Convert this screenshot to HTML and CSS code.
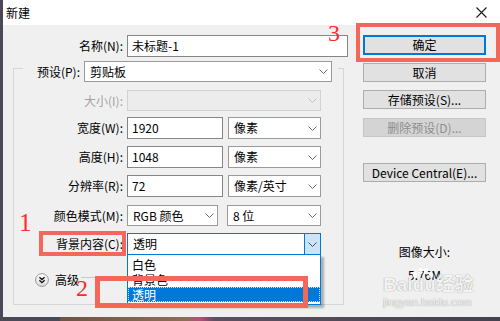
FILE: index.html
```html
<!DOCTYPE html>
<html lang="zh-CN">
<head>
    <meta charset="UTF-8">
    <meta name="viewport" content="width=device-width, initial-scale=1.0">
    <title>新建</title>

    <link rel="stylesheet" href="styles.css">
</head>
<body>
<div class="dialog">
    <div class="titlebar">
        <span>新建</span>
        <svg class="close" width="11" height="11" viewBox="0 0 11 11">
            <path d="M0.5 0.5 L10.5 10.5 M10.5 0.5 L0.5 10.5" stroke="#1a1a1a" stroke-width="1.1" fill="none"/>
        </svg>
    </div>
    <div class="content">
        <div class="form">
            <div class="row name-row">
                <span class="label">名称(N):</span>
                <div class="field name">未标题-1</div>
            </div>
            <div class="group">
                <div class="legend">
                    <span class="label">预设(P):</span>
                    <div class="select preset">
                        <span>剪贴板</span>
                        <span class="drop"><svg width="9" height="5" viewBox="0 0 9 5"><path d="M0.5 0.5 L4.5 4.5 L8.5 0.5" fill="none" stroke="#6b6b6b"/></svg></span>
                    </div>
                </div>
                <div class="row size-row">
                    <span class="label disabled">大小(I):</span>
                    <div class="select wide disabled">
                        <span></span>
                        <span class="drop"><svg width="9" height="5" viewBox="0 0 9 5"><path d="M0.5 0.5 L4.5 4.5 L8.5 0.5" fill="none" stroke="#c2c2c2"/></svg></span>
                    </div>
                </div>
                <div class="row num-row first">
                    <span class="label">宽度(W):</span>
                    <div class="field num">1920</div>
                    <div class="select unit">
                        <span>像素</span>
                        <span class="drop"><svg width="9" height="5" viewBox="0 0 9 5"><path d="M0.5 0.5 L4.5 4.5 L8.5 0.5" fill="none" stroke="#6b6b6b"/></svg></span>
                    </div>
                </div>
                <div class="row num-row">
                    <span class="label">高度(H):</span>
                    <div class="field num">1048</div>
                    <div class="select unit">
                        <span>像素</span>
                        <span class="drop"><svg width="9" height="5" viewBox="0 0 9 5"><path d="M0.5 0.5 L4.5 4.5 L8.5 0.5" fill="none" stroke="#6b6b6b"/></svg></span>
                    </div>
                </div>
                <div class="row num-row">
                    <span class="label">分辨率(R):</span>
                    <div class="field num">72</div>
                    <div class="select unit">
                        <span>像素/英寸</span>
                        <span class="drop"><svg width="9" height="5" viewBox="0 0 9 5"><path d="M0.5 0.5 L4.5 4.5 L8.5 0.5" fill="none" stroke="#6b6b6b"/></svg></span>
                    </div>
                </div>
                <div class="row mode-row">
                    <span class="label">颜色模式(M):</span>
                    <div class="select mode">
                        <span>RGB 颜色</span>
                        <span class="drop"><svg width="9" height="5" viewBox="0 0 9 5"><path d="M0.5 0.5 L4.5 4.5 L8.5 0.5" fill="none" stroke="#6b6b6b"/></svg></span>
                    </div>
                    <div class="select depth">
                        <span>8 位</span>
                        <span class="drop"><svg width="9" height="5" viewBox="0 0 9 5"><path d="M0.5 0.5 L4.5 4.5 L8.5 0.5" fill="none" stroke="#6b6b6b"/></svg></span>
                    </div>
                </div>
                <div class="row bg-row">
                    <span class="label">背景内容(C):</span>
                    <div class="select wide focused">
                        <span>透明</span>
                        <span class="drop"><svg width="9" height="5" viewBox="0 0 9 5"><path d="M0.5 0.5 L4.5 4.5 L8.5 0.5" fill="none" stroke="#4d4d4d"/></svg></span>
                        <ul class="options">
                            <li>白色</li>
                            <li>背景色</li>
                            <li class="selected">透明</li>
                        </ul>
                    </div>
                </div>
                <div class="advanced">
                    <svg class="toggle" width="14" height="14" viewBox="0 0 14 14">
                        <defs>
                            <linearGradient id="knob" x1="0" y1="0" x2="0" y2="1">
                                <stop offset="0" stop-color="#ffffff"/>
                                <stop offset="1" stop-color="#dcdcdc"/>
                            </linearGradient>
                        </defs>
                        <circle cx="7" cy="7" r="6.4" fill="url(#knob)" stroke="#8c8c8c" stroke-width="0.9"/>
                        <path d="M4.4 4.2 L7 6.6 L9.6 4.2 M4.4 7.3 L7 9.7 L9.6 7.3" fill="none" stroke="#111" stroke-width="1.3"/>
                    </svg>
                    <span class="adv-text">高级</span>
                    <span class="rule"></span>
                </div>
            </div>
        </div>
        <div class="side">
            <button class="btn default">确定</button>
            <button class="btn">取消</button>
            <button class="btn">存储预设(S)...</button>
            <button class="btn" disabled>删除预设(D)...</button>
            <button class="btn device">Device Central(E)...</button>
            <div class="image-size">图像大小:</div>
            <div class="image-value">5.76M</div>
        </div>
    </div>
</div>

<div class="mark mark-ok"></div>
<div class="mark mark-bg"></div>
<div class="mark mark-list"></div>
<span class="step step-1">1</span>
<span class="step step-2">2</span>
<span class="step step-3">3</span>

<div class="watermark">
    <svg class="paw" width="22" height="12" viewBox="0 0 22 12">
        <ellipse cx="3" cy="8" rx="2.2" ry="3" fill="#fff"/>
        <ellipse cx="8.5" cy="4" rx="2.2" ry="3.2" fill="#fff"/>
        <ellipse cx="14" cy="4" rx="2.2" ry="3.2" fill="#fff"/>
        <ellipse cx="19" cy="8" rx="2.2" ry="3" fill="#fff"/>
    </svg>
    <span class="wm-logo">Bai<span class="wm-du">du</span>经验</span>
    <span class="wm-url">jingyan.baidu.com</span>
</div>
</body>
</html>
```

FILE: styles.css
```css
* {
    box-sizing: border-box;
}

body {
    position: relative;
    margin: 0;
    height: 321px;
    overflow: hidden;
    background: linear-gradient(to right, #4b4857 0, #4b4857 60px, #6e5444 60px, #8f6d55 185px, #b0527c 200px, #5d5060 214px, #45414e 100%);
    font-family: "Noto Sans CJK SC", "Noto Sans", sans-serif;
    font-size: 12px;
    color: #000;
}

.dialog {
    margin-left: 3px;
    width: 497px;
    height: 317px;
    background-color: #f0f0f0;
}

.titlebar {
    display: flex;
    align-items: center;
    justify-content: space-between;
    height: 25px;
    padding: 0 13px 0 3px;
    background-color: #fff;
    line-height: 16px;
}

.content {
    display: flex;
    padding-top: 10px;
}

.form {
    width: 345px;
}

.row {
    display: flex;
    align-items: center;
}

.label {
    width: 109px;
    margin-right: 4px;
    text-align: right;
    line-height: 16px;
    white-space: nowrap;
}

.label.disabled {
    color: #a3a3a3;
}

.name-row .label {
    width: 120px;
}

.field {
    height: 22px;
    padding-left: 4px;
    border: 1px solid #868686;
    background-color: #fff;
    line-height: 20px;
}

.name {
    width: 221px;
}

.num {
    width: 96px;
}

.group {
    width: 331px;
    margin: 11px 0 0 10px;
    padding-bottom: 16px;
    border: 1px solid #d6d6d6;
}

.legend {
    display: flex;
    align-items: center;
    width: fit-content;
    margin: -8px 0 0 9px;
    padding: 0 6px 0 4px;
    background-color: #f0f0f0;
}

.legend .label {
    width: 53px;
}

.select {
    position: relative;
    display: flex;
    align-items: center;
    justify-content: space-between;
    height: 22px;
    padding-left: 5px;
    border: 1px solid #9a9a9a;
    background-color: #fff;
    line-height: 20px;
    white-space: nowrap;
}

.drop {
    display: flex;
    align-items: center;
    justify-content: center;
    width: 16px;
    height: 100%;
}

.preset {
    width: 248px;
    height: 21px;
}

.wide {
    width: 194px;
}

.select.disabled {
    height: 21px;
    border-color: #d2d2d2;
    background-color: #ececec;
}

.unit {
    width: 93px;
    margin-left: 5px;
}

.mode {
    width: 91px;
    height: 21px;
}

.depth {
    width: 94px;
    height: 21px;
    margin-left: 9px;
}

.size-row {
    margin-top: 8px;
}

.num-row {
    margin-top: 7px;
}

.num-row.first {
    margin-top: 6px;
}

.mode-row {
    margin-top: 8px;
}

.bg-row {
    margin-top: 7px;
}

.focused {
    border-color: #0078d7;
}

.focused .drop {
    border-left: 1px solid #0078d7;
    background-color: #cce4f7;
}

.options {
    position: absolute;
    top: 100%;
    left: -1px;
    width: 194px;
    margin: 0;
    padding: 2px 0;
    list-style: none;
    border: 1px solid #0078d7;
    background-color: #fff;
    box-shadow: 3px 3px 2px rgba(0, 0, 0, 0.28);
}

.options li {
    height: 15px;
    padding-left: 4px;
    line-height: 15px;
}

.options .selected {
    color: #fff;
    background-color: #0078d7;
    outline: 1px dotted #f3d9a4;
    outline-offset: -1px;
}

.advanced {
    display: flex;
    align-items: center;
    height: 16px;
    margin-top: 17px;
    padding-left: 21px;
}

.adv-text {
    margin-left: 6px;
    line-height: 16px;
}

.rule {
    flex: 1;
    align-self: flex-start;
    height: 1px;
    margin: 5px 30px 0 2px;
    background-color: #c9c9c9;
}

.side {
    display: flex;
    flex-direction: column;
    width: 123px;
    margin-left: 15px;
}

.btn {
    height: 19px;
    margin-top: 8px;
    padding: 0;
    border: 1px solid #adadad;
    background-color: #e1e1e1;
    font: inherit;
    line-height: 17px;
    color: #000;
}

.btn.default {
    height: 20px;
    margin-top: 0;
    border: 2px solid #0078d7;
    line-height: 16px;
}

.btn:disabled {
    margin-top: 9px;
    border-color: #c6c6c6;
    background-color: #d4d4d4;
    color: #8e8e8e;
}

.btn.device {
    margin-top: 26px;
}

.image-size {
    margin-top: 62px;
    text-align: center;
    line-height: 16px;
}

.image-value {
    margin-top: 7px;
    text-align: center;
    line-height: 16px;
}

.mark {
    position: absolute;
    border: 4px solid #f4675b;
}

.mark-ok {
    left: 356px;
    top: 23px;
    width: 144px;
    height: 39px;
}

.mark-bg {
    left: 39px;
    top: 231px;
    width: 87px;
    height: 25px;
}

.mark-list {
    left: 95px;
    top: 276px;
    width: 213px;
    height: 32px;
    border-width: 5px;
}

.step {
    position: absolute;
    font-family: "Liberation Serif", serif;
    font-size: 24px;
    line-height: 24px;
    color: #ff2b2b;
}

.step-1 {
    left: 19px;
    top: 211px;
    font-size: 25px;
}

.step-2 {
    left: 76px;
    top: 276px;
}

.step-3 {
    left: 328px;
    top: 21px;
}

.watermark {
    position: absolute;
    left: 383px;
    top: 274px;
    color: rgba(255, 255, 255, 0.92);
    text-shadow: 0 0 1px rgba(0, 0, 0, 0.5);
}

.paw {
    position: absolute;
    left: 29px;
    top: -7px;
    opacity: 0.9;
}

.wm-logo {
    display: block;
    font-family: "Liberation Sans", "Noto Sans CJK SC", sans-serif;
    font-weight: bold;
    font-size: 19px;
    line-height: 22px;
    white-space: nowrap;
}

.wm-url {
    display: block;
    font-family: "Liberation Sans", sans-serif;
    font-size: 11px;
    line-height: 12px;
}
```
